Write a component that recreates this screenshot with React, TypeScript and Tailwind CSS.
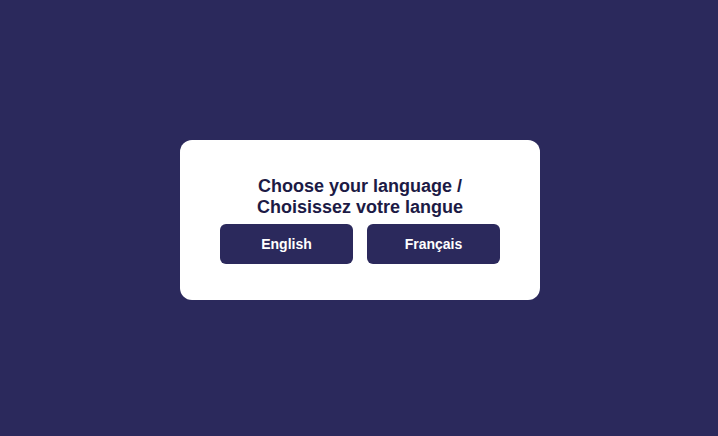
export default function App() {
  return (
    <div className="flex h-[436px] w-full items-center justify-center bg-[#2b295c] pl-[2px] pt-[4px] font-['Liberation_Sans',Arial,sans-serif]">
      <div className="flex w-[360px] flex-col items-center rounded-xl bg-white px-10 pb-[36px] pt-[36px]">
        <h2 className="text-center text-[18px] font-bold leading-[21px] text-[#1c1a45]">
          Choose your language /
          <br />
          Choisissez votre langue
        </h2>
        <div className="mt-[6px] flex w-full gap-[14px]">
          <button className="h-10 flex-1 rounded-md bg-[#2b295c] text-[14px] font-bold text-white">
            English
          </button>
          <button className="h-10 flex-1 rounded-md bg-[#2b295c] text-[14px] font-bold text-white">
            Français
          </button>
        </div>
      </div>
    </div>
  );
}
